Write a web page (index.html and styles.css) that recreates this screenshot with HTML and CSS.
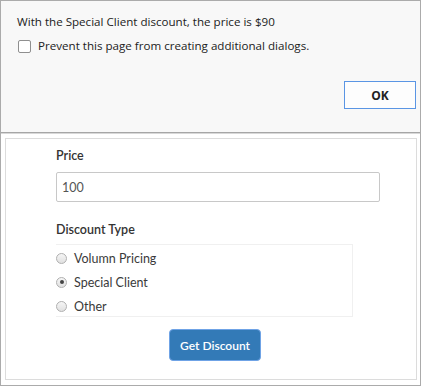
FILE: index.html
```html
<!DOCTYPE html>
<html lang="en">
<head>
    <meta charset="UTF-8">
    <meta name="viewport" content="width=device-width, initial-scale=1.0">
    <title>Discount</title>
    <link rel="stylesheet" href="styles.css">
</head>
<body>
    <div class="frame">
        <div class="dialog">
            <p class="dialog-msg">With the Special Client discount, the price is $90</p>
            <label class="dialog-check"><span class="checkbox"></span>Prevent this page from creating additional dialogs.</label>
            <div class="dialog-actions">
                <button class="btn-ok">OK</button>
            </div>
        </div>

        <div class="page">
            <div class="panel">
                <form class="form">
                    <label class="field-label">Price</label>
                    <input class="field-input" type="text" value="100">

                    <label class="field-label label-type">Discount Type</label>
                    <div class="radio-group">
                        <label class="radio"><span class="radio-dot"></span>Volumn Pricing</label>
                        <label class="radio"><span class="radio-dot checked"></span>Special Client</label>
                        <label class="radio"><span class="radio-dot"></span>Other</label>
                    </div>

                    <div class="actions">
                        <button type="button" class="btn-primary">Get Discount</button>
                    </div>
                </form>
            </div>
        </div>
    </div>
</body>
</html>
```

FILE: styles.css
```css
body {
    margin: 0;
    background: #fff;
}
.frame {
    width: 421px;
    height: 386px;
    box-sizing: border-box;
    border: 1px solid #ababab;
    display: flex;
    flex-direction: column;
}

/* alert dialog */
.dialog {
    height: 131px;
    flex-shrink: 0;
    background: #f8f8f8;
    border-bottom: 1px solid #a6a6a6;
    font-family: 'Open Sans', sans-serif;
    font-size: 11.6px;
    color: #222;
    display: flex;
    flex-direction: column;
    padding: 0 4px 0 16px;
}
.dialog-msg {
    margin: 12px 0 0;
    line-height: 18px;
}
.dialog-check {
    display: flex;
    align-items: center;
    margin: 7px 0 0 1px;
    line-height: 16px;
}
.checkbox {
    width: 11px;
    height: 11px;
    border: 1px solid #8f8f8f;
    border-radius: 2px;
    background: #fff;
    margin-right: 7px;
}
.dialog-actions {
    display: flex;
    justify-content: flex-end;
    margin-top: 27px;
}
.btn-ok {
    width: 72px;
    height: 28px;
    font-family: 'Open Sans', sans-serif;
    font-size: 12px;
    font-weight: bold;
    color: #222;
    background: #fdfdfd;
    border: 1px solid #5a95e4;
    border-radius: 0;
    padding: 0;
}

/* page behind the dialog */
.page {
    flex: 1;
    display: flex;
    border-top: 1px solid #d8d8d8;
    padding: 4px 3px 5px 4px;
}
.panel {
    flex: 1;
    border: 1px solid #dcdcdc;
    padding: 8px 0 0 50px;
}
.form {
    width: 324px;
    font-family: 'Lato', sans-serif;
    font-size: 12.5px;
    color: #333;
    display: flex;
    flex-direction: column;
}
.field-label {
    font-weight: 600;
    line-height: 18px;
}
.field-input {
    margin-top: 7px;
    height: 30px;
    box-sizing: border-box;
    border: 1px solid #c8c8c8;
    border-radius: 2px;
    padding: 0 5px;
    font-family: 'Lato', sans-serif;
    font-size: 12.5px;
    color: #555;
}
.label-type {
    margin-top: 19px;
}
.radio-group {
    margin-top: 5px;
    width: 297px;
    height: 73px;
    box-sizing: border-box;
    border: 1px solid #f0f0f0;
    border-left: none;
    padding-top: 1px;
}
.radio {
    display: flex;
    align-items: center;
    height: 24px;
    color: #3a3a3a;
}
.radio-dot {
    width: 9px;
    height: 9px;
    border: 1px solid #b0b0b0;
    border-radius: 50%;
    background: linear-gradient(#f6f6f6, #e0e0e0);
    margin-right: 7px;
    position: relative;
}
.radio-dot.checked::after {
    content: '';
    position: absolute;
    left: 2.5px;
    top: 2.5px;
    width: 4px;
    height: 4px;
    border-radius: 50%;
    background: #444;
}
.actions {
    margin-top: 12px;
    padding-left: 113px;
}
.btn-primary {
    width: 92px;
    height: 32px;
    background: #337ab7;
    border: 1px solid #6fa3e6;
    border-radius: 4px;
    color: #fff;
    font-family: 'Lato', sans-serif;
    font-size: 12px;
    font-weight: 600;
    padding: 0;
}
```
